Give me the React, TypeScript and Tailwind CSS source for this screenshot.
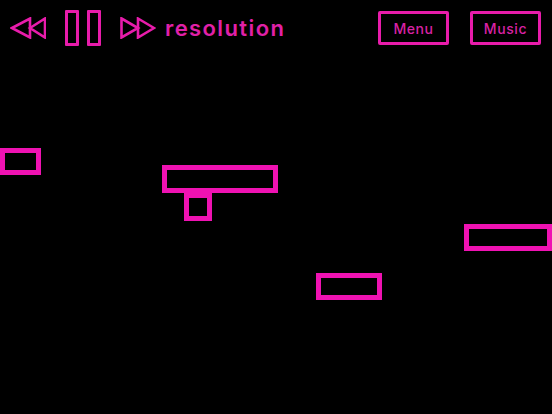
const PINK = "#e81cab";

const platforms = [
  { id: 1, cls: "left-0 top-[148px] w-[41px] h-[27px]" },
  { id: 2, cls: "left-[162px] top-[165px] w-[116px] h-[28px]" },
  { id: 3, cls: "left-[184px] top-[193px] w-[28px] h-[28px]" },
  { id: 4, cls: "left-[316px] top-[273px] w-[66px] h-[27px]" },
  { id: 5, cls: "left-[464px] top-[224px] w-[88px] h-[27px]" },
];

function Rewind() {
  return (
    <svg width="36" height="22" viewBox="0 0 36 22" fill="none" stroke={PINK} strokeWidth="2.6">
      <path d="M2 11 L20 1.5 V20.5 Z" />
      <path d="M20 11 L35 1.5 V20.5 Z" />
    </svg>
  );
}

function Forward() {
  return (
    <svg width="36" height="22" viewBox="0 0 36 22" fill="none" stroke={PINK} strokeWidth="2.6">
      <path d="M1.5 1.5 L18 11 L1.5 20.5 Z" />
      <path d="M18 1.5 L34 11 L18 20.5 Z" />
    </svg>
  );
}

function MenuButton({ label }: { label: string }) {
  return (
    <button className="w-[71px] h-[34px] border-[3px] border-[#e81cab] rounded-[2px] flex items-center justify-center text-[14px] font-medium tracking-[0.6px] text-[#d822a4] font-['Inter',sans-serif]">
      {label}
    </button>
  );
}

export default function App() {
  return (
    <div className="relative w-[552px] h-[414px] bg-black overflow-hidden">
      <header className="flex items-start pt-[10px] pl-[10px] pr-[11px]">
        <div className="mt-[7px]">
          <Rewind />
        </div>
        <div className="flex gap-[8px] ml-[19px]">
          <div className="w-[14px] h-[36px] border-[3px] border-[#e81cab] rounded-[1px]" />
          <div className="w-[14px] h-[36px] border-[3px] border-[#e81cab] rounded-[1px]" />
        </div>
        <div className="mt-[7px] ml-[19px]">
          <Forward />
        </div>
        <span className="ml-[9px] mt-[3px] text-[22px] leading-[30px] font-semibold tracking-[1.4px] text-[#e020a8] font-['Inter',sans-serif]">
          resolution
        </span>
        <div className="flex gap-[21px] ml-auto mt-[1px]">
          <MenuButton label="Menu" />
          <MenuButton label="Music" />
        </div>
      </header>
      {platforms.map((p) => (
        <div key={p.id} className={`absolute border-[5px] border-[#ef12b2] ${p.cls}`} />
      ))}
    </div>
  );
}
